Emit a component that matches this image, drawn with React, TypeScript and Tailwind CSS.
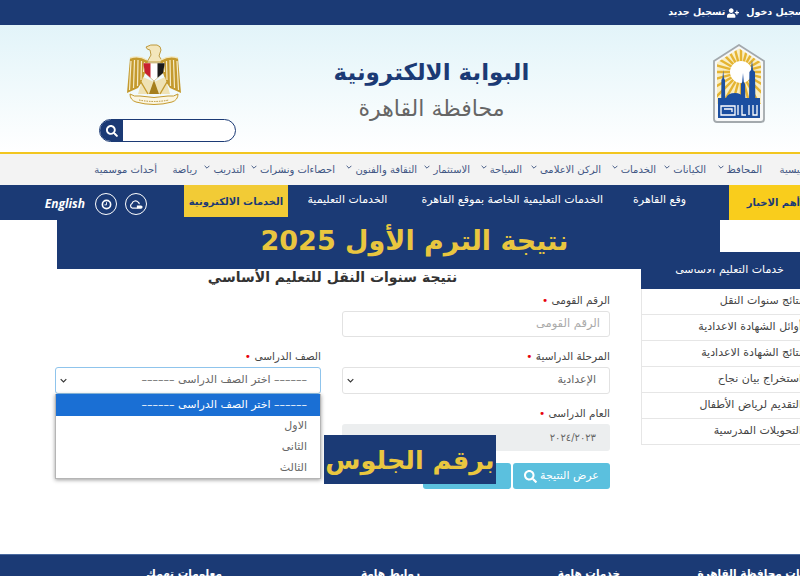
import { FaSearch, FaUserPlus } from 'react-icons/fa';

const NAVY = 'bg-[#1b3a75]';

const menu = [
  { label: 'الرئيسية', width: 'w-[52px]' },
  { label: 'المحافظ', width: 'w-[56px]', more: true },
  { label: 'الكيانات', width: 'w-[50px]', more: true },
  { label: 'الخدمات', width: 'w-[55px]', more: true },
  { label: 'الركن الاعلامى', width: 'w-[79px]', more: true },
  { label: 'السياحة', width: 'w-[52px]', more: true },
  { label: 'الاستثمار', width: 'w-[53px]', more: true },
  { label: 'الثقافة والفنون', width: 'w-[82px]', more: true },
  { label: 'احصاءات ونشرات', width: 'w-[90px]', more: true },
  { label: 'التدريب', width: 'w-[48px]', more: true },
  { label: 'رياضة', width: 'w-[40px]' },
  { label: 'أحداث موسمية', width: 'w-[68px]' },
];

const sideLinks = [
  'نتائج سنوات النقل',
  'أوائل الشهادة الاعدادية',
  'نتائج الشهادة الاعدادية',
  'استخراج بيان نجاح',
  'التقديم لرياض الأطفال',
  'التحويلات المدرسية',
];

const GRADE_PROMPT = '–––––– اختر الصف الدراسى ––––––';

function Chevron({ className = '' }: { className?: string }) {
  return (
    <svg viewBox="0 0 10 6" className={className} fill="none" stroke="currentColor" strokeWidth="1.6">
      <path d="M1 1l4 4 4-4" />
    </svg>
  );
}

// Cairo governorate badge: arched frame, sun rays, mosque silhouette
function CairoLogo() {
  const arch = 'M1 17 L26 1 L51 17 V75 Q51 78 48 78 H4 Q1 78 1 75 Z';
  const rays = Array.from({ length: 24 }, (_, i) => (i * 15 * Math.PI) / 180);
  return (
    <svg viewBox="0 0 52 80" className="w-[52px] h-[80px]">
      <defs>
        <clipPath id="badge-field">
          <path d="M4 18.5 L26 4.5 L48 18.5 V60 H4 Z" />
        </clipPath>
      </defs>
      <path d={arch} fill="#f7f8f8" stroke="#a3a9ad" strokeWidth="1.8" />
      <g clipPath="url(#badge-field)">
        <rect width="52" height="62" fill="#f9eec4" />
        {rays.map((a, i) => (
          <line key={i} x1={28 + 10 * Math.cos(a)} y1={28 + 10 * Math.sin(a)} x2={28 + 40 * Math.cos(a)} y2={28 + 40 * Math.sin(a)} stroke="#e5b432" strokeWidth="2.4" />
        ))}
      </g>
      <circle cx="28" cy="28" r="11" fill="#fff" />
      <path d="M9.5 34 L10.2 26 L10.9 34 L12 36 L12.2 58 H8.2 L8.4 36 Z" fill="#1c4fa0" />
      <path d="M38 26 L39 16 L40 26 L42 28 L42.4 58 H36 L36.4 28 Z" fill="#1c4fa0" />
      <path d="M29.2 38 L30 29 L30.8 38 L32 40 L32.4 58 H27.8 L28 40 Z" fill="#1c4fa0" />
      <path d="M5 60 V54 H13 Q15 49 22 49 Q28 49 31 54 H47 V60 Z" fill="#1c4fa0" />
      <rect x="5" y="59" width="42" height="15" fill="#1c4fa0" />
      <path d="M8 62 H22 V71 H8 Z M11 65 H19 V68 M25 61 V71 M29 61 V71 H33 M36 61 V71 M40 61 V71 H44 V61" fill="none" stroke="#fff" strokeWidth="1.3" />
    </svg>
  );
}

// Eagle of Saladin with the flag shield
function EagleEmblem() {
  return (
    <svg viewBox="0 0 56 62" className="w-[56px] h-[62px]">
      {/* head */}
      <path d="M20 3 Q24 0 31 1 Q35 2 35 6 L33 12 L37 18 H21 L25 11 L24 6 Q21 6 20 3 Z" fill="#f3e6bb" stroke="#b8912f" strokeWidth="0.9" />
      {/* wings */}
      <path d="M4 14 Q13 11 21 16 L22 20 L16 38 L12 44 L1 49 Z" fill="#c49a2e" />
      <path d="M52 14 Q43 11 35 16 L34 20 L40 38 L44 44 L55 49 Z" fill="#c49a2e" />
      <path d="M5 17 L3.5 46 M8.5 16 L7.5 44 M12 16 L11.5 42 M15.5 17 L15 36 M18.5 18 L17.5 28" stroke="#f6ebc6" strokeWidth="1.2" />
      <path d="M51 17 L52.5 46 M47.5 16 L48.5 44 M44 16 L44.5 42 M40.5 17 L41 36 M37.5 18 L38.5 28" stroke="#f6ebc6" strokeWidth="1.2" />
      <path d="M4 14 Q13 11 21 16 M52 14 Q43 11 35 16" fill="none" stroke="#f3e6bb" strokeWidth="1.4" />
      {/* legs and tail */}
      <path d="M17 33 L28 38 L39 33 L44 50 H12 Z" fill="#efe2b4" />
      <path d="M28 36 L23 50 H33 Z" fill="#a57f1e" />
      <path d="M15 38 L22 50 M41 38 L34 50" stroke="#c49a2e" strokeWidth="1.4" />
      {/* shield */}
      <path d="M17 19 H39 L37 29 L28 37 L19 29 Z" fill="#fff" stroke="#b8912f" strokeWidth="0.5" />
      <path d="M17.3 19.3 H24.5 V33.8 L19 29 Z" fill="#c8202f" />
      <path d="M31.5 19.3 H38.7 L37 29 L31.5 33.8 Z" fill="#1a1a1a" />
      {/* scroll */}
      <path d="M4 50 Q8 53 14 52 Q28 55 42 52 Q48 53 52 50 Q52 56 46 58 Q28 63 10 58 Q4 56 4 50 Z" fill="#fbf6e2" stroke="#c49a2e" strokeWidth="1" />
      <path d="M13 56 Q28 59 43 56" fill="none" stroke="#b8912f" strokeWidth="1" strokeDasharray="1.5 1" />
    </svg>
  );
}

function Field({ label, className = '', children }: { label: string; className?: string; children: React.ReactNode }) {
  return (
    <div className={className}>
      <div className="text-[10.5px] leading-[14px] text-[#444] h-[14px] mb-[4px]">
        {label} <span className="text-red-600">•</span>
      </div>
      {children}
    </div>
  );
}

function SelectBox({ value, focused }: { value: string; focused?: boolean }) {
  return (
    <div className={`h-[27px] rounded-[3px] border bg-white flex items-center justify-between px-[4px] text-[11px] text-[#666] ${focused ? 'border-[#8fc4ec]' : 'border-[#e2e2e2]'}`}>
      <span className="pr-[9px]">{value}</span>
      <Chevron className="w-[7px] h-[5px] text-[#333]" />
    </div>
  );
}

export default function App() {
  return (
    <div dir="rtl" className="relative w-[800px] h-[576px] overflow-hidden bg-white font-['DejaVu_Sans',sans-serif]">
      {/* account strip */}
      <div className={`${NAVY} h-[25px] flex items-center gap-[7px] text-white text-[9.5px] font-bold -mr-[8px]`}>
        <span>تسجيل دخول</span>
        <span className="flex items-center gap-[2px]">
          <FaUserPlus className="w-[12px] h-[10px]" />
          تسجيل جديد
        </span>
      </div>

      {/* masthead */}
      <header className="h-[127px] bg-gradient-to-b from-[#e2f4f9] to-white flex pr-[35px]">
        <div className="pt-[19px]">
          <CairoLogo />
        </div>
        <div className="w-[197px] mr-[183px] pt-[31px] text-center">
          <h1 className="text-[23px] leading-[32px] font-bold text-[#1b3a75] whitespace-nowrap">البوابة الالكترونية</h1>
          <p className="text-[22px] leading-[30px] mt-[6px] text-[#666] whitespace-nowrap">محافظة القاهرة</p>
        </div>
        <div className="w-[137px] mr-[97px] pt-[19px] flex flex-col items-center">
          <div className="mr-[27px]">
            <EagleEmblem />
          </div>
          <div className="mt-[13px] w-[137px] h-[23px] rounded-full border border-[#1b3a75] bg-white flex justify-end overflow-hidden shrink-0">
            <span className={`${NAVY} w-[23px] flex items-center justify-center text-white`}>
              <FaSearch className="w-[12px] h-[12px]" />
            </span>
          </div>
        </div>
      </header>

      {/* main menu */}
      <nav className="h-[33px] border-t-2 border-[#f2c61f] bg-[#f3f3f3] flex items-center text-[10px] text-[#3f5683] -mr-[14px]">
        {menu.map((item) => (
          <div key={item.label} className={`${item.width} shrink-0 flex items-center gap-[3px] whitespace-nowrap`}>
            {item.label}
            {item.more && <Chevron className="w-[6px] h-[4px] mb-[5px]" />}
          </div>
        ))}
      </nav>

      {/* section bar */}
      <div className={`${NAVY} h-[35px] flex items-stretch text-white text-[11px] whitespace-nowrap`}>
        <div className="w-[71px] bg-[#f9cd1c] text-[#1b3a75] text-[10px] font-bold flex items-center overflow-hidden shrink-0">أهم الاخبار</div>
        <div className="w-[441px] shrink-0 flex items-center pb-[5px]">
          <span className="mr-[43px]">وقع القاهرة</span>
          <span className="mr-[30px]">الخدمات التعليمية الخاصة بموقع القاهرة</span>
          <span className="mr-[34px] w-[79px] overflow-hidden">الخدمات التعليمية</span>
        </div>
        <div className="w-[104px] h-[32px] pt-[1px] bg-[#f2cb36] text-[#1b3a75] font-bold flex items-center justify-center text-[10px] shrink-0">الخدمات الالكترونية</div>
        <div className="w-[184px] flex items-center pt-[3px] pr-[37px] gap-[8px] shrink-0">
          <span className="w-[22px] h-[22px] rounded-full border border-white flex items-center justify-center">
            <svg viewBox="0 0 15 10" className="w-[14px] h-[9px]">
              <path d="M3 9 a2.8 2.8 0 0 1 0-5 a4 4 0 0 1 7-1.5 a2 2 0 0 1 1 2" fill="none" stroke="#fff" strokeWidth="1.3" />
              <path d="M3 9 H9" stroke="#fff" strokeWidth="1.3" />
              <path d="M8.5 6 H13 a1.5 1.5 0 0 1 0 3.6 H8.5 Z" fill="#fff" />
            </svg>
          </span>
          <span className="w-[22px] h-[22px] rounded-full border border-white flex items-center justify-center">
            <svg viewBox="0 0 12 12" className="w-[11px] h-[11px]" fill="none" stroke="#fff">
              <circle cx="6" cy="6" r="4.5" strokeWidth="1.8" />
              <path d="M6 3.5 V6.4 H3.8" strokeWidth="1" />
            </svg>
          </span>
          <span dir="ltr" className="mr-[2px] font-['Open_Sans',sans-serif] text-[12px] font-bold italic">English</span>
        </div>
      </div>

      {/* content area */}
      <main className="h-[334px] flex">
        <aside className="w-[175px] shrink-0 -mr-[16px] pt-[32px]">
          <div className={`${NAVY} h-[37px] flex items-center justify-center text-white text-[11px] pl-[2px]`}>خدمات التعليم الاساسى</div>
          <ul className="text-[11px] text-[#444]">
            {sideLinks.map((link) => (
              <li key={link} className="h-[26px] border-b border-l border-[#e6e6e6] flex items-center pr-[14px] whitespace-nowrap">{link}</li>
            ))}
          </ul>
        </aside>

        <section className="w-[555px] mr-[31px] pt-[48px]">
          <h2 className="text-[14px] leading-[18px] font-bold text-[#333] text-center whitespace-nowrap">نتيجة سنوات النقل للتعليم الأساسي</h2>
          <div className="grid grid-cols-[268px_266px] gap-x-[21px] mt-[7px]">
            <Field label="الرقم القومى">
              <div className="h-[26px] rounded-[3px] border border-[#e2e2e2] flex items-center pr-[9px] text-[11.5px] text-[#aaa]">الرقم القومى</div>
            </Field>
            <div />
            <Field label="المرحلة الدراسية" className="mt-[12px]">
              <SelectBox value="الإعدادية" />
            </Field>
            <Field label="الصف الدراسى" className="mt-[12px] relative">
              <SelectBox value={GRADE_PROMPT} focused />
              {/* open list of the grade select */}
              <div className="absolute top-[45px] left-0 right-0 z-10 bg-white border-x border-b border-[#b5b5b5] shadow-[0_1px_4px_rgba(0,0,0,0.4)] text-[11px] text-[#666]">
                <div className="h-[22px] bg-[#1a6fd4] text-white flex items-center pr-[13px]">{GRADE_PROMPT}</div>
                <div className="h-[21px] flex items-center pr-[13px]">الاول</div>
                <div className="h-[21px] flex items-center pr-[13px]">الثانى</div>
                <div className="h-[20px] flex items-center pr-[13px]">الثالث</div>
              </div>
            </Field>
            <Field label="العام الدراسى" className="mt-[12px]">
              <div className="h-[27px] rounded-[3px] bg-[#eceeef] flex items-center pr-[14px] text-[10px] text-[#666]">٢٠٢٤/٢٠٢٣</div>
            </Field>
          </div>
          <div className="flex gap-[2px] mt-[12px] text-[11px] text-white">
            <button className="w-[97px] h-[26px] rounded-[3px] bg-[#5bc0de] flex items-center justify-center gap-[3px]">
              عرض النتيجة
              <FaSearch className="w-[13px] h-[13px]" />
            </button>
            <button className="w-[88px] h-[26px] rounded-[3px] bg-[#5bc0de]" />
          </div>
        </section>
      </main>

      <footer className={`${NAVY} h-[22px] border-t border-[#4a6aa0] flex text-white text-[10.5px] font-bold leading-[22px] whitespace-nowrap`}>
        <span className="mr-[-20px] w-[123px] pt-[7px]">خدمات محافظة القاهرة</span>
        <span className="mr-[77px] w-[63px] pt-[7px]">خدمات هامة</span>
        <span className="mr-[137px] w-[53px] pt-[7px]">روابط هامة</span>
        <span className="mr-[145px] w-[81px] pt-[7px]">معلومات تهمك</span>
      </footer>

      {/* promo captions laid over the page */}
      <div className={`${NAVY} absolute left-[57px] top-[218px] w-[663px] h-[51px] flex items-center justify-center pl-[52px] pb-[4px] text-[#e9c63f] text-[27px] font-bold whitespace-nowrap`}>
        نتيجة الترم الأول 2025
      </div>
      <div className={`${NAVY} absolute left-[324px] top-[435px] w-[172px] h-[49px] flex items-center justify-center pt-[2px] text-[#e9c63f] text-[25.5px] font-bold whitespace-nowrap`}>
        برقم الجلوس
      </div>
    </div>
  );
}
